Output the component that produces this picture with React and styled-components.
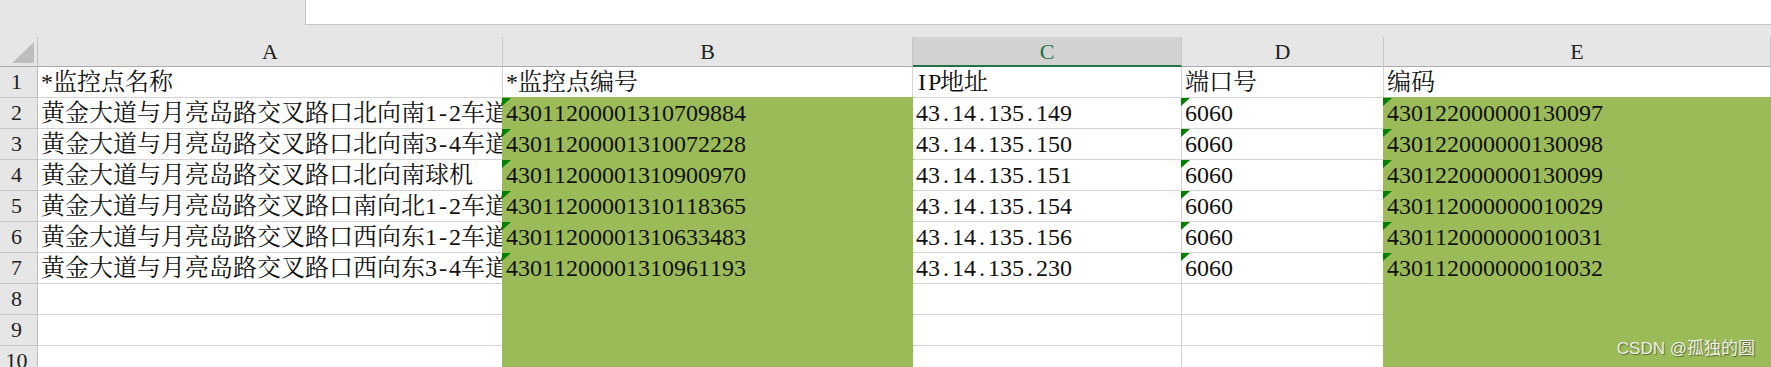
import React from 'react';
import styled, { createGlobalStyle } from 'styled-components';

const GREEN = '#9bbb59';
const GRID = '#d4d4d4';
const HEAD = '#e6e6e6';

const columns = ['A', 'B', 'C', 'D', 'E'];
const filledCols = [1, 4];
const flaggedCols = [1, 3, 4];

const rows = [
  ['*监控点名称', '*监控点编号', 'IP地址', '端口号', '编码'],
  ['黄金大道与月亮岛路交叉路口北向南1-2车道', '43011200001310709884', '43.14.135.149', '6060', '430122000000130097'],
  ['黄金大道与月亮岛路交叉路口北向南3-4车道', '43011200001310072228', '43.14.135.150', '6060', '430122000000130098'],
  ['黄金大道与月亮岛路交叉路口北向南球机', '43011200001310900970', '43.14.135.151', '6060', '430122000000130099'],
  ['黄金大道与月亮岛路交叉路口南向北1-2车道', '43011200001310118365', '43.14.135.154', '6060', '430112000000010029'],
  ['黄金大道与月亮岛路交叉路口西向东1-2车道', '43011200001310633483', '43.14.135.156', '6060', '430112000000010031'],
  ['黄金大道与月亮岛路交叉路口西向东3-4车道', '43011200001310961193', '43.14.135.230', '6060', '430112000000010032'],
  ['', '', '', '', ''],
  ['', '', '', '', ''],
  ['', '', '', '', ''],
];

// half-width glyphs, the way SimSun spaces them
const renderText = (str) => {
  const out = [];
  let run = '';
  [...str].forEach((ch, i) => {
    if (ch.charCodeAt(0) < 128) {
      if (run) out.push(run);
      run = '';
      out.push(<Half key={i}>{ch}</Half>);
    } else {
      run += ch;
    }
  });
  if (run) out.push(run);
  return out;
};

export default function App() {
  return (
    <>
      <GlobalStyle />
      <Sheet>
        <TopBar>
          <FormulaBox />
        </TopBar>
        <Grid>
          <Corner>
            <SelectAll />
          </Corner>
          {columns.map((c, i) => (
            <ColHeader key={c} selected={i === 2}>
              {c}
            </ColHeader>
          ))}
          {rows.map((row, r) => (
            <React.Fragment key={r}>
              <RowHeader>{r + 1}</RowHeader>
              {row.map((val, c) => {
                const filled = r > 0 && filledCols.includes(c);
                const flagged = r > 0 && val && flaggedCols.includes(c);
                return (
                  <Cell key={c} filled={filled}>
                    {flagged && <Flag />}
                    <CellText>{renderText(val)}</CellText>
                  </Cell>
                );
              })}
            </React.Fragment>
          ))}
        </Grid>
        <Watermark>CSDN @孤独的圆</Watermark>
      </Sheet>
    </>
  );
}

const GlobalStyle = createGlobalStyle`
  html, body {
    margin: 0;
    padding: 0;
    background: #fff;
    overflow: hidden;
  }
`;

const Sheet = styled.div`
  position: relative;
  width: 1771px;
  height: 367px;
  overflow: hidden;
  background: ${HEAD};
`;

const TopBar = styled.div`
  display: flex;
  height: 37px;
  padding-left: 305px;
  box-sizing: border-box;
`;

const FormulaBox = styled.div`
  flex: 1;
  height: 25px;
  background: #fff;
  border-left: 1px solid #c6c6c6;
  border-bottom: 1px solid #c6c6c6;
  box-sizing: border-box;
`;

const Grid = styled.div`
  display: grid;
  grid-template-columns: 38px 465px 410px 269px 202px 1fr;
  grid-template-rows: 30px repeat(10, 31px);
  background: #fff;
`;

const Corner = styled.div`
  display: flex;
  justify-content: flex-end;
  align-items: flex-end;
  padding: 0 3px 3px 0;
  background: ${HEAD};
  border-right: 1px solid #bfbfbf;
  border-bottom: 1px solid #ababab;
  box-sizing: border-box;
`;

const SelectAll = styled.div`
  width: 22px;
  height: 21px;
  background: #bdbdbd;
  clip-path: polygon(100% 0, 100% 100%, 0 100%);
`;

const ColHeader = styled.div`
  display: flex;
  align-items: center;
  justify-content: center;
  background: ${({ selected }) => (selected ? '#d2d2d2' : HEAD)};
  color: ${({ selected }) => (selected ? '#217346' : '#222')};
  border-right: 1px solid #c6c6c6;
  border-bottom: ${({ selected }) => (selected ? '2px solid #217346' : '1px solid #ababab')};
  box-sizing: border-box;
  font-family: 'Liberation Serif', serif;
  font-size: 22px;
  padding-top: 1px;
`;

const RowHeader = styled.div`
  display: flex;
  align-items: center;
  justify-content: center;
  padding-right: 4px;
  background: ${HEAD};
  color: #222;
  border-right: 1px solid #bfbfbf;
  border-bottom: 1px solid #c6c6c6;
  box-sizing: border-box;
  font-family: 'Liberation Serif', serif;
  font-size: 22px;
`;

const Cell = styled.div`
  position: relative;
  min-width: 0;
  background: ${({ filled }) => (filled ? GREEN : '#fff')};
  border-right: 1px solid ${({ filled }) => (filled ? GREEN : GRID)};
  border-bottom: 1px solid ${({ filled }) => (filled ? GREEN : GRID)};
  box-shadow: ${({ filled }) => (filled ? `0 0 0 1px ${GREEN}` : 'none')};
  box-sizing: border-box;
`;

const CellText = styled.div`
  padding-left: 3px;
  white-space: nowrap;
  overflow: hidden;
  color: #111;
  font-family: 'Liberation Serif', 'Noto Serif CJK SC', 'Noto Sans CJK SC', serif;
  font-size: 24px;
  line-height: 30px;
`;

const Half = styled.span`
  display: inline-block;
  width: 0.5em;
  text-align: center;
`;

const Flag = styled.div`
  position: absolute;
  left: -1px;
  top: 0;
  width: 9px;
  height: 8px;
  background: #008000;
  clip-path: polygon(0 0, 100% 0, 0 100%);
`;

const Watermark = styled.div`
  position: absolute;
  right: 16px;
  bottom: 8px;
  color: #eef0e8;
  font-family: 'Liberation Sans', 'Noto Sans CJK SC', sans-serif;
  font-size: 17px;
  text-shadow: 1px 1px 1px rgba(0, 0, 0, 0.45);
`;
